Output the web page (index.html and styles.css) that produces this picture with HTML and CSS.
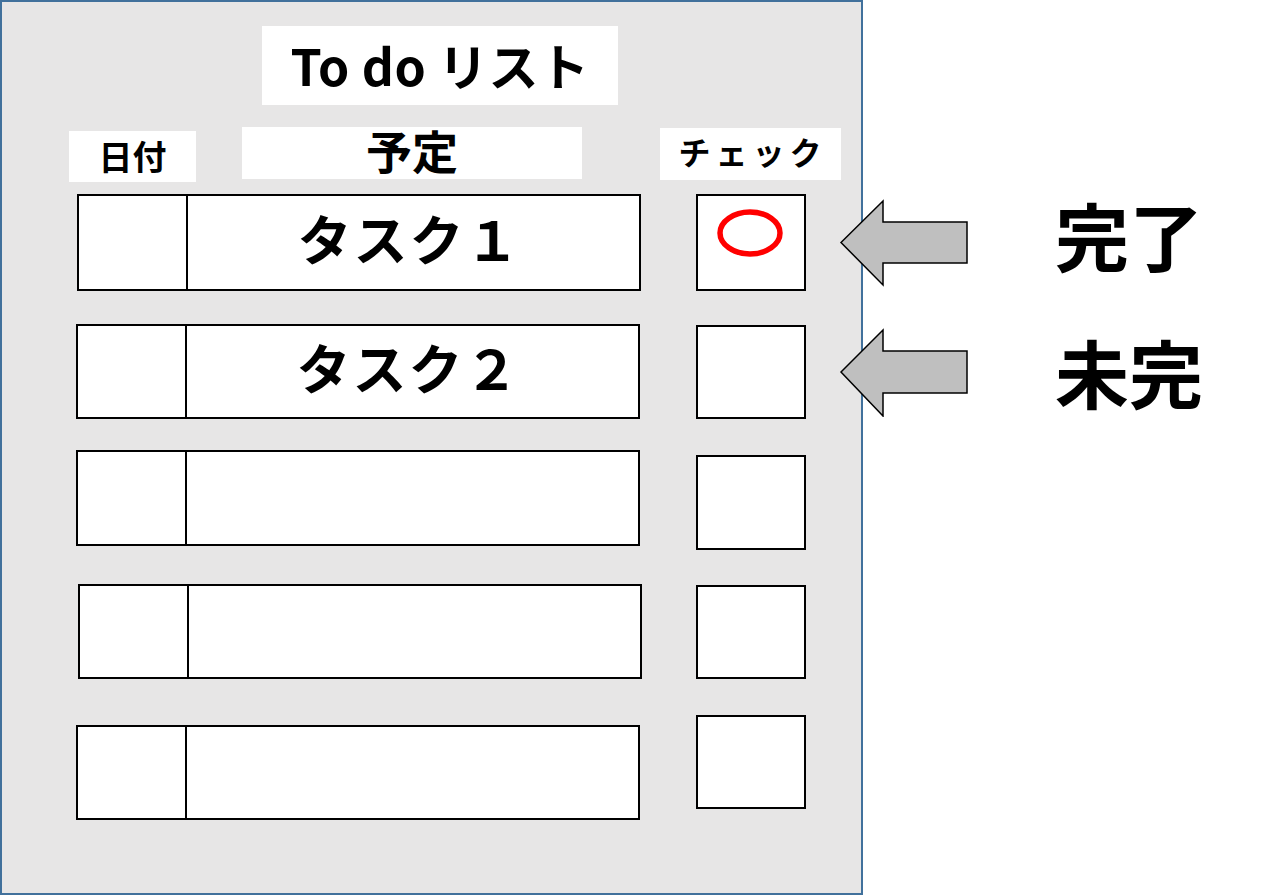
FILE: index.html
```html
<!DOCTYPE html>
<html lang="ja">
<head>
<meta charset="utf-8">
<title>To do リスト</title>
<link rel="stylesheet" href="styles.css">
</head>
<body>
<main class="panel">
  <div class="title">To do リスト</div>
  <div class="heads">
    <div class="head head-date">日付</div>
    <div class="head head-plan">予定</div>
    <div class="head head-check">チェック</div>
  </div>
  <div class="rows">
    <div class="row">
      <div class="task"><div class="date"></div><div class="name">タスク１</div></div>
      <div class="check">
        <svg class="mark" width="106" height="93" viewBox="0 0 106 93"><ellipse cx="52" cy="37" rx="30" ry="21" fill="none" stroke="#ff0000" stroke-width="5.5"/></svg>
      </div>
    </div>
    <div class="row">
      <div class="task"><div class="date"></div><div class="name">タスク２</div></div>
      <div class="check"></div>
    </div>
    <div class="row">
      <div class="task"><div class="date"></div><div class="name"></div></div>
      <div class="check"></div>
    </div>
    <div class="row">
      <div class="task"><div class="date"></div><div class="name"></div></div>
      <div class="check"></div>
    </div>
    <div class="row">
      <div class="task"><div class="date"></div><div class="name"></div></div>
      <div class="check"></div>
    </div>
  </div>
</main>
<aside class="legend">
  <div class="legend-item">
    <svg class="arrow" width="130" height="89" viewBox="0 0 130 89"><path d="M2 43.5 L44 2 L44 23 L128 23 L128 64 L44 64 L44 86 Z" fill="#bfbfbf" stroke="#000" stroke-width="1.5" stroke-linejoin="miter"/></svg>
    <span class="legend-label">完了</span>
  </div>
  <div class="legend-item">
    <svg class="arrow" width="130" height="89" viewBox="0 0 130 89"><path d="M2 44 L44 2 L44 23 L128 23 L128 65 L44 65 L44 88 Z" fill="#bfbfbf" stroke="#000" stroke-width="1.5" stroke-linejoin="miter"/></svg>
    <span class="legend-label">未完</span>
  </div>
</aside>
</body>
</html>
```
FILE: styles.css
```css
* { box-sizing: border-box; }

html, body {
  margin: 0;
  padding: 0;
  background: #ffffff;
}

body {
  display: flex;
  align-items: flex-start;
  width: 1264px;
  height: 895px;
  overflow: hidden;
  font-family: "Noto Sans CJK JP", "Noto Sans", sans-serif;
  font-weight: 700;
  color: #000;
}

.panel {
  flex: none;
  width: 863px;
  height: 895px;
  border: 2px solid #41719c;
  background: #e7e6e6;
  display: flex;
  flex-direction: column;
}

.title {
  margin: 24px 0 0 260px;
  width: 356px;
  height: 79px;
  background: #fff;
  display: flex;
  align-items: center;
  justify-content: center;
  font-size: 50px;
  line-height: 1;
  letter-spacing: 0.5px;
  padding: 0 0 4px 0;
}

.heads {
  display: flex;
  align-items: flex-start;
  margin-top: 22px;
  height: 55px;
}

.head {
  background: #fff;
  display: flex;
  align-items: center;
  justify-content: center;
  line-height: 1;
}

.head-date {
  margin: 4px 0 0 67px;
  width: 127px;
  height: 51px;
  font-size: 34px;
  padding-bottom: 2px;
}

.head-plan {
  margin-left: 46px;
  width: 340px;
  height: 52px;
  font-size: 46px;
  padding-bottom: 8px;
}

.head-check {
  margin: 1px 0 0 78px;
  width: 181px;
  height: 52px;
  font-size: 32px;
  letter-spacing: 5px;
  padding: 0 0 6px 4px;
}

.rows {
  display: flex;
  flex-direction: column;
}

.row {
  display: flex;
  align-items: flex-start;
}

.task {
  display: flex;
  width: 564px;
  height: 96px;
  margin-left: 74px;
  border: 2px solid #000;
  background: #fff;
}

.date {
  flex: none;
  width: 109px;
  border-right: 2px solid #000;
}

.name {
  flex: 1;
  display: flex;
  align-items: center;
  justify-content: center;
  font-size: 54px;
  line-height: 1;
  letter-spacing: 2px;
  padding: 0 8px 10px 0;
}

.check {
  width: 110px;
  height: 95px;
  margin-left: 56px;
  border: 2px solid #000;
  background: #fff;
}

.mark { display: block; }

.row:nth-child(1) { margin-top: 12px; }
.row:nth-child(1) .task { margin-left: 75px; height: 97px; }
.row:nth-child(1) .check { margin-left: 55px; height: 97px; }
.row:nth-child(2) { margin-top: 33px; }
.row:nth-child(2) .task { height: 95px; }
.row:nth-child(2) .check { margin-top: 1px; height: 94px; }
.row:nth-child(3) { margin-top: 31px; }
.row:nth-child(3) .check { margin-top: 5px; margin-bottom: -5px; }
.row:nth-child(4) { margin-top: 38px; }
.row:nth-child(4) .task { margin-left: 76px; height: 95px; }
.row:nth-child(4) .check { margin-left: 54px; margin-top: 1px; height: 94px; }
.row:nth-child(5) { margin-top: 46px; }
.row:nth-child(5) .task { height: 95px; }
.row:nth-child(5) .check { margin-top: -10px; height: 94px; }

.legend {
  flex: none;
  margin-left: -24px;
  padding-top: 199px;
  display: flex;
  flex-direction: column;
}

.legend-item {
  display: flex;
  align-items: center;
  height: 89px;
}

.legend-item + .legend-item { margin-top: 40px; }

.arrow { flex: none; display: block; }

.legend-label {
  margin-left: 86px;
  font-size: 74px;
  line-height: 1;
  margin-top: -20px;
}

.legend-item + .legend-item .legend-label { margin-top: -4px; }
```
